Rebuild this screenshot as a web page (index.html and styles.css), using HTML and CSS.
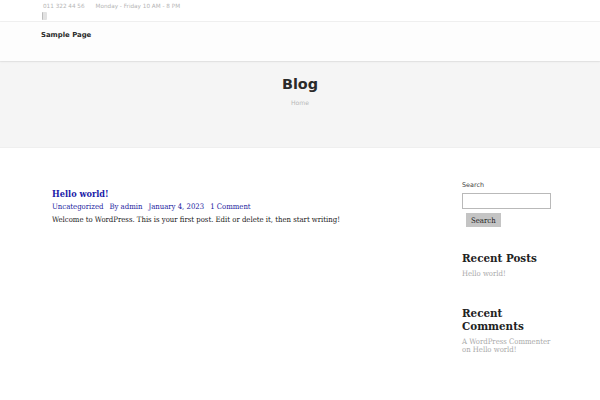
FILE: index.html
```html
<!DOCTYPE html>
<html>
  <head>
    <meta charset="utf-8" />
    <title>Blog</title>
    <link rel="stylesheet" href="styles.css">
  </head>
  <body>
    <div class="topbar">
      <div class="topbar-info">
        <span>011 322 44 56</span>
        <span>Monday - Friday 10 AM - 8 PM</span>
      </div>
      <div class="topbar-icon"></div>
    </div>

    <div class="header">
      <a class="menu-link" href="#">Sample Page</a>
    </div>

    <div class="page-title">
      <h1>Blog</h1>
      <div class="crumbs">Home</div>
    </div>

    <div class="content">
      <div class="main">
        <div class="post">
          <h2><a href="#">Hello world!</a></h2>
          <div class="meta">
            <a href="#">Uncategorized</a>
            <a href="#">By admin</a>
            <a href="#">January 4, 2023</a>
            <a href="#">1 Comment</a>
          </div>
          <p>Welcome to WordPress. This is your first post. Edit or delete it, then start writing!</p>
        </div>
      </div>

      <div class="sidebar">
        <form class="search">
          <label for="s">Search</label>
          <input type="text" id="s">
          <button type="button">Search</button>
        </form>

        <div class="widget">
          <h3>Recent Posts</h3>
          <a class="widget-link" href="#">Hello world!</a>
        </div>

        <div class="widget">
          <h3>Recent Comments</h3>
          <div class="widget-link">A WordPress Commenter on Hello world!</div>
        </div>
      </div>
    </div>
  </body>
</html>
```

FILE: styles.css
```css
body {
  margin: 0;
  font-family: "DejaVu Serif Condensed", "DejaVu Serif", serif;
  font-stretch: condensed;
  background: #fff;
  color: #222;
}

a {
  text-decoration: none;
}

.topbar {
  height: 21px;
  padding-left: 42px;
  border-bottom: 1px solid #f0f0f0;
  font-family: "DejaVu Sans", sans-serif;
  font-stretch: normal;
  font-size: 5.7px;
  color: #b5b5b5;
}

.topbar-info {
  display: flex;
  gap: 11px;
  padding-top: 3px;
  padding-left: 1px;
  line-height: 6px;
}

.topbar-icon {
  width: 4px;
  height: 8px;
  margin-top: 3px;
  background: #e2e2e2;
  border-left: 1px solid #bcbcbc;
  border-radius: 1px;
}

.header {
  height: 39px;
  padding-left: 41px;
  background: #fdfdfd;
  box-shadow: 0 1px 2px rgba(0, 0, 0, 0.06);
  position: relative;
}

.menu-link {
  display: inline-block;
  margin-top: 9px;
  font-family: "DejaVu Sans", sans-serif;
  font-stretch: normal;
  font-weight: bold;
  font-size: 6.9px;
  color: #2a2a2a;
}

.page-title {
  height: 85px;
  background: #f5f5f5;
  border-top: 1px solid #ececec;
  border-bottom: 1px solid #efefef;
  text-align: center;
  font-family: "DejaVu Sans", sans-serif;
  font-stretch: normal;
}

.page-title h1 {
  margin: 0;
  padding-top: 13px;
  font-size: 14.4px;
  line-height: 18px;
  color: #2a2a2a;
}

.crumbs {
  margin-top: 6px;
  font-size: 6.1px;
  color: #b8b8b8;
}

.content {
  display: flex;
  padding: 39px 0 0 52px;
}

.main {
  width: 410px;
}

.post h2 {
  margin: 0;
  font-size: 9.1px;
  line-height: 13px;
}

.post h2 a {
  color: #1b1ba8;
}

.meta {
  display: flex;
  gap: 6px;
  font-size: 7.7px;
  line-height: 13px;
}

.meta a {
  color: #2323a0;
}

.post p {
  margin: 0;
  font-size: 7.7px;
  line-height: 13px;
  color: #222;
}

.sidebar {
  width: 90px;
  margin-top: -6px;
}

.search label {
  display: block;
  font-family: "DejaVu Sans", sans-serif;
  font-stretch: normal;
  font-size: 6.4px;
  line-height: 9px;
  color: #444;
}

.search input {
  display: block;
  box-sizing: border-box;
  width: 89px;
  height: 16px;
  margin-top: 3px;
  border: 1px solid #b9b9b9;
  padding: 0;
}

.search button {
  display: block;
  margin: 4px 0 0 4px;
  padding: 0 5px;
  height: 14px;
  border: none;
  background: #c4c4c4;
  font-family: "DejaVu Serif Condensed", "DejaVu Serif", serif;
  font-stretch: condensed;
  font-size: 7.7px;
  color: #222;
}

.widget {
  padding-top: 25px;
}

.widget + .widget {
  padding-top: 29px;
}

.widget h3 {
  margin: 0 0 5px;
  font-size: 11.5px;
  line-height: 13px;
  color: #222;
}

.widget-link {
  display: block;
  font-size: 7.7px;
  line-height: 8px;
  color: #aaa;
}
```
